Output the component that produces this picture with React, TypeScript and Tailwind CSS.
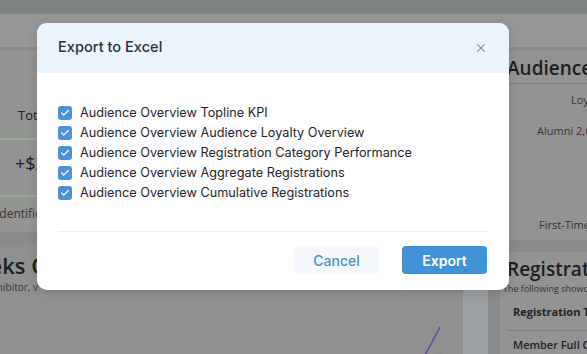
import { X, Check } from "lucide-react";

const items = [
  "Audience Overview Topline KPI",
  "Audience Overview Audience Loyalty Overview",
  "Audience Overview Registration Category Performance",
  "Audience Overview Aggregate Registrations",
  "Audience Overview Cumulative Registrations",
];

const Background = () => (
  <div className="flex h-[354px] w-[587px] flex-col bg-[#8a8a8a] font-['Open_Sans',sans-serif] text-[#2a2a2a]">
    <div className="h-[14px] bg-[#7f8383]" />
    <div className="h-[33px] bg-[#979797]" />
    <div className="flex flex-1 gap-[10px] pt-[3px]">
      {/* left / centre column */}
      <div className="flex w-[490px] flex-col gap-[12px]">
        <div className="flex h-[182px] flex-col bg-[#939393] pt-[56px] text-[13px]">
          <div className="pl-[18px] text-[#222]">Tot</div>
          <div className="mt-[12px] h-[2px] w-[90px] bg-[#8fb08a]" />
          <div className="mt-[10px] pl-[15px] text-[18px] text-[#222]">+$2</div>
          <div className="mt-[18px] h-[2px] w-[90px] bg-[#8fb08a]" />
          <div className="ml-[-4px] mt-[8px] text-[12px] text-[#333]">Identified</div>
        </div>
        <div className="flex flex-1">
          <div className="flex w-[463px] flex-col overflow-hidden bg-[#909090] pt-[6px]">
            <div className="ml-[-44px] whitespace-nowrap text-[22px] font-semibold leading-[30px] text-[#1e1e1e]">Weeks C</div>
            <div className="ml-[-14px] whitespace-nowrap text-[10px] text-[#3a3a3a]">exhibitor, v</div>
            <div className="relative flex-1">
              <svg className="absolute left-[410px] top-[30px]" width="40" height="40" viewBox="0 0 40 40">
                <path d="M30 2 L12 36" stroke="#6a3fa0" strokeWidth="1.5" fill="none" />
                <path d="M24 30 L32 28" stroke="#8a8a8a" strokeWidth="1.5" fill="none" />
              </svg>
            </div>
          </div>
          <div className="w-[25px] bg-[#9ba0a4]" />
        </div>
      </div>
      {/* right column */}
      <div className="flex flex-1 flex-col gap-[12px] overflow-hidden">
        <div className="flex h-[190px] flex-col bg-[#939393] pl-[7px] pt-[5px]">
          <div className="whitespace-nowrap text-[19px] font-semibold leading-[26px] text-[#1e1e1e]">Audience Overview</div>
          <div className="mt-[2px] h-px bg-[#7d7d7d]" />
          <div className="ml-[64px] mt-[8px] whitespace-nowrap text-[11px] text-[#333]">Loyalty</div>
          <div className="ml-[30px] mt-[14px] whitespace-nowrap text-[11px] text-[#333]">Alumni 2,686</div>
          <div className="ml-[32px] mt-[78px] whitespace-nowrap text-[11px] text-[#333]">First-Timers</div>
        </div>
        <div className="flex flex-1 flex-col bg-[#939393] pl-[7px] pt-[4px]">
          <div className="whitespace-nowrap text-[19px] font-semibold leading-[26px] text-[#1e1e1e]">Registration</div>
          <div className="ml-[-4px] whitespace-nowrap text-[9px] text-[#333]">The following showcases</div>
          <div className="mt-[8px] whitespace-nowrap pl-[6px] text-[11px] font-bold text-[#222]">Registration Type</div>
          <div className="mt-[10px] h-px bg-[#7d7d7d]" />
          <div className="mt-[6px] whitespace-nowrap pl-[6px] text-[11px] font-semibold text-[#222]">Member Full Conf</div>
        </div>
      </div>
    </div>
  </div>
);

export default function App() {
  return (
    <div className="relative h-[354px] w-[587px] overflow-hidden">
      <Background />
      <div className="absolute left-[37px] top-[23px] flex h-[267px] w-[472px] flex-col overflow-hidden rounded-[10px] bg-white font-['Inter',sans-serif] shadow-[0_2px_10px_rgba(0,0,0,0.15)]">
        <div className="flex h-[50px] items-center justify-between bg-[#eaf4fd] px-[21px]">
          <span className="text-[14.6px] font-medium text-[#2c2f33]">Export to Excel</span>
          <X size={14} strokeWidth={1.8} className="text-[#7a7f86]" />
        </div>
        <div className="flex flex-col gap-[6px] pl-[21px] pt-[33px]">
          {items.map((t) => (
            <div key={t} className="flex h-[14px] items-center gap-[8px]">
              <span className="flex h-[14px] w-[14px] items-center justify-center rounded-[3px] bg-[#4a91d8]">
                <Check size={10} strokeWidth={3} className="text-white" />
              </span>
              <span className="whitespace-nowrap text-[12.7px] leading-[14px] text-[#1f2328]">{t}</span>
            </div>
          ))}
        </div>
        <div className="mx-[21px] mt-[31px] h-px bg-[#eeeeee]" />
        <div className="flex justify-end gap-[23px] pr-[22px] pt-[14px]">
          <button className="h-[28px] w-[85px] rounded-[4px] bg-[#f4f8fd] text-[14px] font-medium text-[#4a8fd0]">Cancel</button>
          <button className="h-[28px] w-[85px] rounded-[4px] bg-[#4192d9] text-[14px] font-semibold text-white">Export</button>
        </div>
      </div>
    </div>
  );
}
